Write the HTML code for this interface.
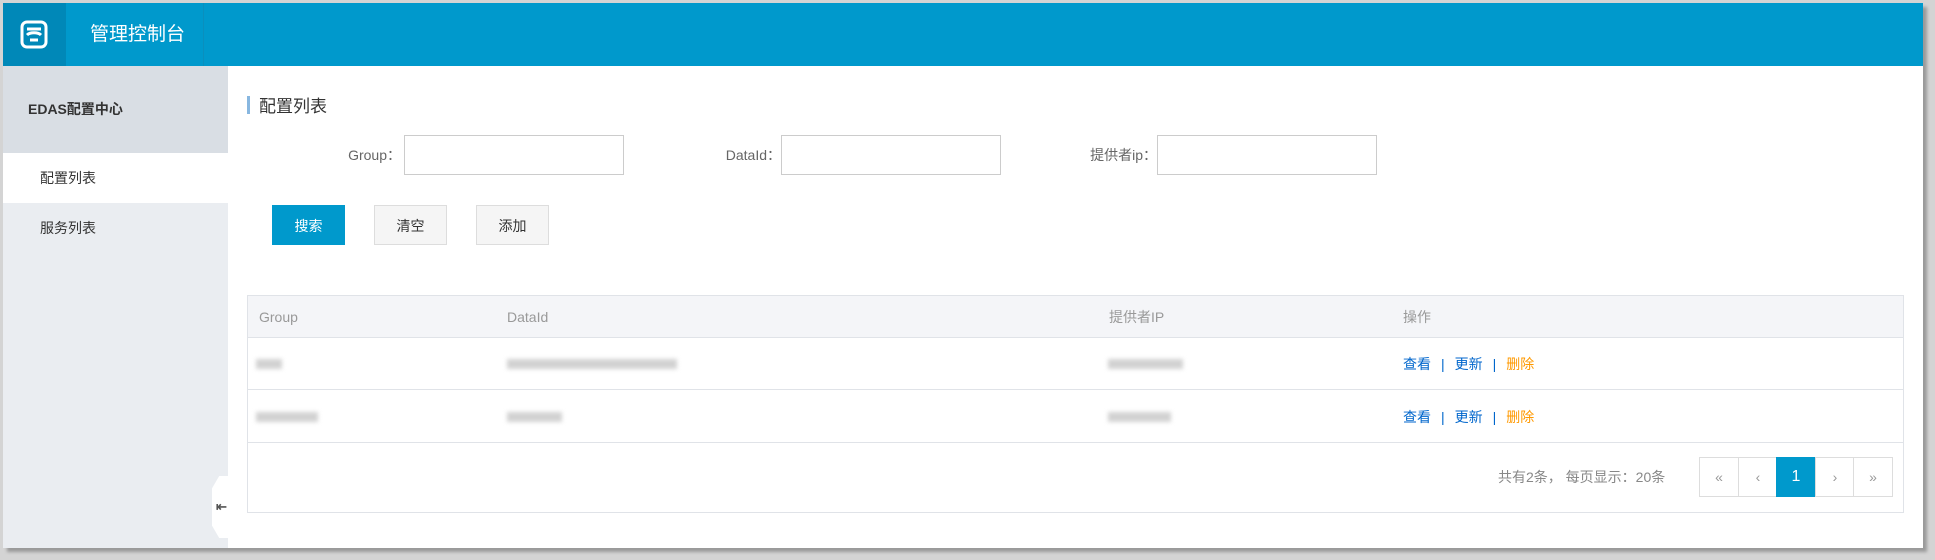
<!DOCTYPE html>
<html><head><meta charset="utf-8"><style>
*{margin:0;padding:0;box-sizing:border-box}
body{width:1935px;height:560px;background:#fff;position:relative;overflow:hidden;font-family:"Liberation Sans","Noto Sans CJK SC",sans-serif;font-size:14px;color:#333}
.frame{position:absolute;left:0;top:0;width:1935px;height:560px;background:#d4d4d4}
.page{position:absolute;left:3px;top:3px;width:1920px;height:545px;background:#fff;box-shadow:4px 4px 3px #9a9a9a}
.hdr{position:absolute;left:0;top:0;width:1920px;height:63px;background:#0099cc}
.logo{position:absolute;left:0;top:0;width:63px;height:63px;background:#0088b8}
.ttl{position:absolute;left:87px;top:0;line-height:63px;color:#fff;font-size:19px}
.div{position:absolute;left:200px;top:0;width:1px;height:63px;background:#0a8fbd}
.side{position:absolute;left:0;top:63px;width:225px;height:482px;background:#eaedf1}
.stop{height:87px;background:#d9dee4;font-weight:bold;font-size:14px;line-height:87px;padding-left:25px;color:#333}
.act{height:50px;background:#fff;line-height:50px;padding-left:37px}
.it{height:50px;line-height:50px;padding-left:37px}
.abs{position:absolute}
.inp{position:absolute;height:40px;border:1px solid #ccc;background:#fff;top:132px}
.lbl{position:absolute;top:132px;line-height:40px;color:#666;text-align:right}
.btn{position:absolute;top:202px;height:40px;width:73px;line-height:40px;text-align:center;border:1px solid #ddd;background:#f5f5f5;color:#333}
.tbl{position:absolute;left:244px;top:292px;width:1657px;height:218px;border:1px solid #e0e3e8}
.th{position:absolute;left:0;top:0;width:100%;height:42px;background:#f4f5f8;border-bottom:1px solid #e0e3e8;color:#999}
.row{position:absolute;left:0;width:100%;height:52px;border-bottom:1px solid #e0e3e8}
.c{position:absolute;line-height:42px}
.blur{position:absolute;height:10px;background:#d2d2d2;filter:blur(2px)}
.op{position:absolute;left:1155px;line-height:52px}
.op a{color:#0066cc;text-decoration:none}.op .d{color:#ff9900}.op .s{color:#0066cc;margin:0 10px}
.pg{position:absolute;top:161px;height:40px;border:1px solid #ddd;width:40px;text-align:center;line-height:38px;color:#999;background:#fff}
</style></head><body>
<div class="frame"></div>
<div class="page">
 <div class="hdr">
  <div class="logo"><svg width="63" height="63"><rect x="19" y="19" width="24" height="25" rx="5" fill="none" stroke="#fff" stroke-width="3"/><path d="M24 26h14M24 32c3-3 11-3 14 0M27 37h8" stroke="#fff" stroke-width="3" fill="none"/></svg></div>
  <div class="ttl">管理控制台</div>
  <div class="div"></div>
 </div>
 <div class="side">
  <div class="stop">EDAS配置中心</div>
  <div class="act">配置列表</div>
  <div class="it">服务列表</div>
  <div class="abs" style="left:209px;top:410px;width:18px;height:62px;background:#fff;clip-path:polygon(40% 0,100% 0,100% 100%,40% 100%,0 80%,0 20%)"></div>
  <div class="abs" style="left:213px;top:433px;font-size:13px;font-weight:bold;color:#555">⇤</div>
 </div>
 <div class="abs" style="left:244px;top:93px;width:3px;height:18px;background:#88b7e0"></div>
 <div class="abs" style="left:256px;top:89px;font-size:17px;color:#333">配置列表</div>
 <div class="lbl" style="left:300px;width:98px">Group：</div><div class="inp" style="left:401px;width:220px"></div>
 <div class="lbl" style="left:680px;width:98px">DataId：</div><div class="inp" style="left:778px;width:220px"></div>
 <div class="lbl" style="left:1030px;width:124px">提供者ip：</div><div class="inp" style="left:1154px;width:220px"></div>
 <div class="btn" style="left:269px;background:#0099cc;border-color:#0099cc;color:#fff">搜索</div>
 <div class="btn" style="left:371px">清空</div>
 <div class="btn" style="left:473px">添加</div>
 <div class="tbl">
  <div class="th"><div class="c" style="left:11px">Group</div><div class="c" style="left:259px">DataId</div><div class="c" style="left:861px">提供者IP</div><div class="c" style="left:1155px">操作</div></div>
  <div class="row" style="top:42px">
   <div class="blur" style="left:8px;top:21px;width:26px"></div><div class="blur" style="left:259px;top:21px;width:170px"></div><div class="blur" style="left:860px;top:21px;width:75px"></div>
   <div class="op"><a>查看</a><span class="s">|</span><a>更新</a><span class="s">|</span><a class="d">删除</a></div>
  </div>
  <div class="row" style="top:95px">
   <div class="blur" style="left:8px;top:21px;width:62px"></div><div class="blur" style="left:259px;top:21px;width:55px"></div><div class="blur" style="left:860px;top:21px;width:63px"></div>
   <div class="op"><a>查看</a><span class="s">|</span><a>更新</a><span class="s">|</span><a class="d">删除</a></div>
  </div>
  <div class="abs" style="left:1250px;top:161px;line-height:40px;color:#888">共有2条， 每页显示：20条</div>
  <div class="pg" style="left:1451px">«</div><div class="pg" style="left:1490px">‹</div>
  <div class="pg" style="left:1528px;background:#0099cc;border-color:#0099cc;color:#fff;font-size:16px">1</div>
  <div class="pg" style="left:1567px">›</div><div class="pg" style="left:1605px">»</div>
 </div>
</div>
</body></html>
